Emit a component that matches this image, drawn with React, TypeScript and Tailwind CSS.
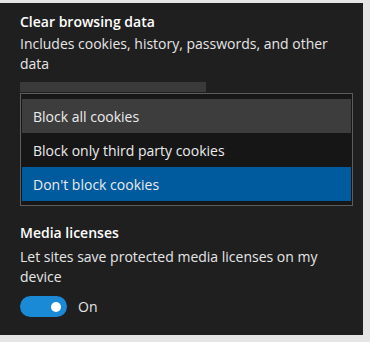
import React from 'react';

const options = [
  { label: 'Block all cookies', className: 'bg-[#3d3d3d]' },
  { label: 'Block only third party cookies', className: 'bg-[#161616]' },
  { label: "Don't block cookies", className: 'bg-[#005a9e]' },
];

const App = () => {
  return (
    <div className="w-[370px] h-[342px] bg-[#e6e6e6] pt-[3px] font-['Open_Sans',sans-serif]">
      <div className="w-[363px] h-[332px] bg-[#1f1f1f] pt-[9px] pl-[20px] flex flex-col">
        {/* Clear browsing data */}
        <h2 className="text-[14px] leading-[20px] font-semibold text-white">Clear browsing data</h2>
        <p className="mt-[2px] w-[330px] text-[14px] leading-[20px] text-[#e6e6e6]">
          Includes cookies, history, passwords, and other data
        </p>

        {/* Cookie dropdown */}
        <div className="mt-[8px] w-[186px] h-[10px] bg-[#3a3a3a]" />
        <div className="mt-[1px] w-[333px] border border-[#5c5c5c] bg-[#171717] pt-[5px] pb-[4px] px-[1px]">
          {options.map((o) => (
            <div
              key={o.label}
              className={`h-[34px] flex items-center pl-[11px] text-[14px] text-[#ececec] ${o.className}`}
            >
              {o.label}
            </div>
          ))}
        </div>

        {/* Media licenses */}
        <h2 className="mt-[17px] text-[14px] leading-[20px] font-semibold text-white">Media licenses</h2>
        <p className="mt-[4px] w-[330px] text-[14px] leading-[20px] text-[#e6e6e6]">
          Let sites save protected media licenses on my device
        </p>
        <div className="mt-[9px] flex items-center gap-[11px]">
          <div className="w-[47px] h-[21px] rounded-full bg-[#1a8ad6] flex items-center justify-end pr-[6px]">
            <div className="w-[10px] h-[10px] rounded-full bg-white" />
          </div>
          <span className="text-[14px] text-[#e6e6e6]">On</span>
        </div>
      </div>
    </div>
  );
};

export default App;
